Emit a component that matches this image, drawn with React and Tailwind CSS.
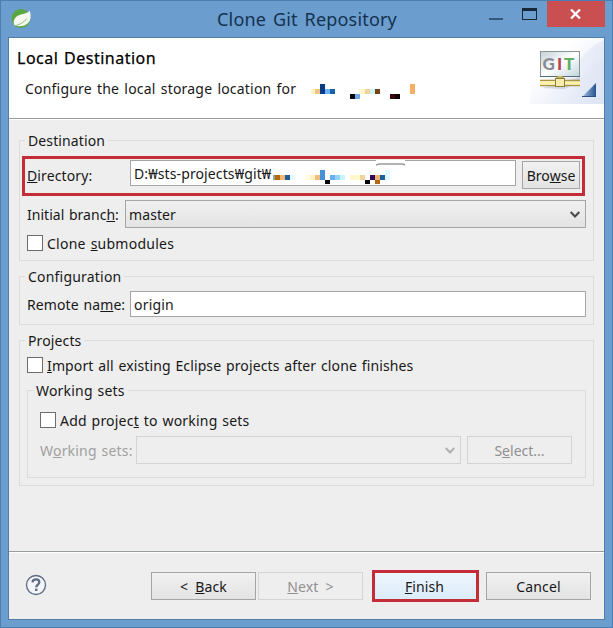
// [x, y, width, height, color]
const headerBlocks = [
  [1, 5, 4, 5, "#fff3c4"],
  [5, 5, 5, 5, "#eec489"],
  [10, 0, 5, 10, "#0a3c86"],
  [15, 5, 5, 5, "#6cb2f4"],
  [20, 5, 5, 5, "#1762a8"],
  [40, 10, 5, 5, "#08080c"],
  [45, 10, 5, 5, "#71a9e8"],
  [49, 5, 6, 5, "#fff6cb"],
  [55, 5, 5, 5, "#f2d39b"],
  [60, 5, 5, 5, "#c8f5ff"],
  [65, 5, 5, 5, "#7c4317"],
  [80, 10, 5, 5, "#38060c"],
  [85, 10, 5, 5, "#100305"],
  [100, 0, 5, 10, "#f4ae66"],
];

const pathBlocks = [
  [0, 5, 3, 5, "#8fa69a"],
  [2, 5, 5, 5, "#b4690f"],
  [7, 5, 5, 5, "#f0b775"],
  [12, 5, 5, 5, "#1c5d9c"],
  [17, 5, 5, 5, "#e6fbff"],
  [32, 5, 5, 5, "#fffbe6"],
  [37, 5, 5, 5, "#fff3c0"],
  [42, 5, 5, 5, "#f2bc7c"],
  [47, 0, 5, 10, "#4590d6"],
  [52, 10, 5, 4, "#050505"],
  [57, 5, 5, 5, "#68aef0"],
  [62, 5, 5, 5, "#92d3fa"],
  [67, 5, 5, 5, "#c8f3ff"],
  [77, 5, 10, 5, "#fff8c8"],
  [87, 5, 5, 5, "#f0d49c"],
  [92, 10, 5, 4, "#050505"],
  [97, 5, 5, 5, "#31085c"],
  [102, 5, 5, 5, "#f0b26e"],
  [102, 10, 5, 4, "#b06b12"],
  [107, 5, 5, 5, "#1c5f9f"],
  [112, 0, 5, 10, "#e0faff"],
];

function Blocks({ items, className }) {
  return (
    <svg className={`shrink-0 ${className}`} width="118" height="15" shapeRendering="crispEdges">
      {items.map(([x, y, w, h, fill], i) => (
        <rect key={i} x={x} y={y} width={w} height={h} fill={fill} />
      ))}
    </svg>
  );
}

function SpringLogo() {
  return (
    <svg width="22" height="22" viewBox="0 0 22 22">
      <circle cx="10" cy="10.500" r="9.500" fill="#58a741" />
      <path
        d="M18.500 2.500C17 5.500 12.500 5.500 8.500 7C3.500 9 1.500 13 3.500 17.500C9 19 15 18 18 14C20.300 11 20 6 18.500 2.500Z"
        fill="#f5f9ef"
      />
      <path d="M2.500 18C8.500 17 13 14.500 15.800 10.500" fill="none" stroke="#8dbf7b" strokeWidth="1" />
    </svg>
  );
}

function GitBanner() {
  return (
    <svg className="shrink-0" width="74" height="66" viewBox="0 0 74 66">
      <defs>
        <linearGradient id="sky" x1="0" y1="0" x2="1" y2="1">
          <stop offset="0.300" stopColor="#fff" />
          <stop offset="1" stopColor="#e0e6f5" />
        </linearGradient>
        <linearGradient id="board" x1="0" y1="0" x2="1" y2="1">
          <stop offset="0" stopColor="#c3d0da" />
          <stop offset="0.500" stopColor="#fff" />
          <stop offset="1" stopColor="#c0d4de" />
        </linearGradient>
        <linearGradient id="corner" x1="0" y1="0" x2="1" y2="0">
          <stop offset="0" stopColor="#a9c3e6" />
          <stop offset="1" stopColor="#25528f" />
        </linearGradient>
        <linearGradient id="haze" x1="0" y1="0" x2="1" y2="0">
          <stop offset="0" stopColor="#e4eaf7" stopOpacity="0" />
          <stop offset="1" stopColor="#dde4f4" />
        </linearGradient>
      </defs>
      <rect width="74" height="66" fill="url(#sky)" />
      <path d="M74 2Q58 9 49 23T10 66H74Z" fill="url(#haze)" opacity="0.700" />
      <path d="M74 22Q52 30 35 66H74Z" fill="url(#haze)" opacity="0.700" />
      <path d="M12 50L50 39L50 44L34 51Z" fill="#8e9db8" opacity="0.350" />
      <rect x="10.500" y="13.500" width="39" height="25" fill="url(#board)" stroke="#8d958f" />
      <path d="M10 38.500H50" stroke="#5a6e72" />
      <g fontFamily="Lato, sans-serif" fontSize="17" fontWeight="900" letterSpacing="0">
        <text x="12.500" y="32" fill="#8a8c93">G</text>
        <text x="27" y="32" fill="#b5484e">I</text>
        <text x="34" y="32" fill="#62ae66">T</text>
      </g>
      <path d="M10 42.500H50M10 47.500H50" stroke="#ab963f" strokeWidth="1.500" />
      <path d="M10 45H50" stroke="#fff3a5" strokeWidth="3" />
      <path d="M27 38V41H33V38" fill="#c7b65d" stroke="#92813a" />
      <rect x="25.500" y="40.500" width="9" height="8" fill="#f5edb0" stroke="#8f7e33" />
      <path d="M52 59L66 45V59Z" fill="url(#corner)" />
      <path d="M52 58.500H66" stroke="#2d4d83" />
    </svg>
  );
}

function HelpIcon() {
  return (
    <svg className="mt-[2px] mr-[104px] shrink-0" width="22" height="22" viewBox="0 0 22 22" fill="none" stroke="#5d6b85">
      <circle cx="11" cy="11" r="9.500" strokeWidth="1.300" fill="#f3f5f8" />
      <path d="M7.500 8.300C7.800 4.300 14.300 4.400 14.300 8.200C14.300 10.500 11.200 10.600 11.200 13.300" strokeWidth="2.300" />
      <path d="M11.200 14.600V17" strokeWidth="2.400" />
    </svg>
  );
}

function Group({ title, className, children }) {
  return (
    <section className={`border border-[#dcdcdc] ${className}`}>
      <h2 className="-mt-[11px] ml-[5px] h-[21px] w-fit bg-[#eee] px-[3px] leading-[21px]">{title}</h2>
      {children}
    </section>
  );
}

function Button({ className = "", disabled, children }) {
  return (
    <button
      className={`flex h-[28px] shrink-0 items-center justify-center border pt-[2px] ${
        disabled ? "border-[#d4d4d4] bg-[#eee] text-[#909090]" : "border-[#a5a5a5] bg-linear-to-b from-[#f1f1f1] to-[#e3e3e3]"
      } ${className}`}
    >
      {children}
    </button>
  );
}

function Combo({ value, disabled, className }) {
  return (
    <div
      className={`flex h-[28px] items-center justify-between border pr-[5px] pl-[3px] ${
        disabled ? "border-[#d4d4d4] text-[#b0b0b0]" : "border-[#a5a5a5] bg-linear-to-b from-[#f0f0f0] to-[#e3e3e3] text-[#484848]"
      } ${className}`}
    >
      <span className="pt-px tracking-[0.1px] text-[#181818]">{value}</span>
      <svg className="mt-[2px]" width="10" height="8" viewBox="0 0 10 8">
        <path d="M0.700 1L5 5.500L9.300 1" fill="none" stroke="currentColor" strokeWidth="2" />
      </svg>
    </div>
  );
}

function Check({ className = "", children }) {
  return (
    <label className={`flex h-[16px] items-center gap-[4px] ${className}`}>
      <span className="size-[16px] shrink-0 border border-[#6c6c6c] bg-white" />
      <span className="pt-px whitespace-pre">{children}</span>
    </label>
  );
}

export default function App() {
  return (
    <div className="flex h-[628px] w-[613px] flex-col border border-[#4b7eb2] bg-[#6b9dce] px-[7px] pb-[7px] font-['Noto_Sans','Noto_Sans_CJK_KR',sans-serif] text-[14px] leading-[20px] tracking-[0.12px] text-[#181818] [word-spacing:1px] select-none">
      <header className="flex h-[36px] shrink-0 items-start">
        <div className="mt-[7px] ml-[3px] w-[206px] shrink-0">
          <SpringLogo />
        </div>
        <h1 className="mt-[6px] w-[258px] shrink-0 text-[18px] leading-[24px] tracking-[0.18px] whitespace-nowrap text-[#14324f] [word-spacing:2px]">Clone Git Repository</h1>
        <svg className="mt-[7px] shrink-0" width="64" height="14" viewBox="0 0 64 14">
          <path d="M14 11H28" stroke="#345878" strokeWidth="2" />
          <rect x="47.500" y="0.500" width="14" height="11" fill="none" stroke="#172938" />
          <path d="M47 1.500H62" stroke="#172938" strokeWidth="3" />
        </svg>
        <div className="ml-[8px] flex h-[26px] w-[58px] shrink-0 items-center justify-center bg-[#c94f50]">
          <svg className="-ml-px" width="11" height="10" viewBox="0 0 11 10">
            <path d="M1 0.500L10 9.500M10 0.500L1 9.500" stroke="#fff" strokeWidth="2.200" />
          </svg>
        </div>
      </header>

      <main className="flex min-h-0 w-[597px] flex-1 flex-col border border-[#527da8] bg-[#eee]">
        <div className="flex h-[81px] shrink-0 justify-between border-b border-[#969c9b] bg-white">
          <div className="pt-[9px] pl-[8px]">
            <h2 className="text-[16px] leading-[22px] tracking-[0.5px] text-black [-webkit-text-stroke:0.25px_black]">Local Destination</h2>
            <div className="mt-[10px] ml-[8px] flex">
              <p className="w-[272px] tracking-[0.2px] whitespace-nowrap [word-spacing:1.300px]">Configure the local storage location for</p>
              <Blocks items={headerBlocks} className="mt-[5px] ml-[13px]" />
            </div>
          </div>
          <GitBanner />
        </div>

        <div className="flex h-[433px] shrink-0 flex-col border-t border-b border-t-white border-b-[#969c9b] pt-[20px] pl-[10px]">
          <Group title="Destination" className="h-[121px] w-[575px]">
            <div className="mt-[5px] ml-[2px] flex h-[40px] w-[563px] border-[3px] border-[#c32d38] pl-[2px]">
              <span className="mt-[7px] w-[103px]"><u>D</u>irectory:</span>
              <div className="mt-px flex h-[26px] w-[386px] border border-[#a5a5a5] bg-white pl-[3px] leading-[25px] whitespace-nowrap">
                <span className="w-[139px]">D:₩sts-projects₩git₩</span>
                <Blocks items={pathBlocks} className="mt-[9px]" />
                <svg className="-mt-px -ml-[15px]" width="30" height="6">
                  <path d="M0 0H29V3H0Z" fill="#fff" />
                  <path d="M0 5L3 4H27L29 5" fill="none" stroke="#9b9b9b" strokeWidth="1.500" />
                </svg>
              </div>
              <Button className="mt-[2px] ml-[6px] w-[58px] tracking-normal">Bro<u>w</u>se</Button>
            </div>
            <div className="mt-[4px] ml-[7px] flex items-center">
              <span className="w-[98px] pt-px tracking-[0.02px] whitespace-nowrap">Initial branc<u>h</u>:</span>
              <Combo value="master" className="w-[461px]" />
            </div>
            <Check className="mt-[7px] ml-[7px] tracking-[0.25px]">Clone <u>s</u>ubmodules</Check>
          </Group>

          <Group title="Configuration" className="mt-[15px] h-[49px] w-[575px] tracking-[0.2px]">
            <div className="mt-[4px] ml-[7px] flex items-center">
              <span className="w-[103px] pt-px tracking-[0.1px] whitespace-nowrap">Remote na<u>m</u>e:</span>
              <div className="h-[26px] w-[456px] border border-[#a5a5a5] bg-white pl-[3px] leading-[26px]">origin</div>
            </div>
          </Group>

          <Group title="Projects" className="mt-[15px] h-[146px] w-[575px]">
            <Check className="mt-[6px] ml-[7px]"><u>I</u>mport all existing Eclipse projects after clone finishes</Check>
            <Group title="Working sets" className="mt-[17px] ml-[7px] h-[88px] w-[559px] tracking-[0.2px]">
              <Check className="mt-[11px] ml-[12px]">Add projec<u>t</u> to working sets</Check>
              <div className="mt-[8px] ml-[12px] flex items-center">
                <span className="w-[96px] pt-px whitespace-nowrap text-[#a0a0a0]">W<u>o</u>rking sets:</span>
                <Combo disabled className="w-[325px]" />
                <Button disabled className="ml-[6px] w-[105px] tracking-normal">S<u>e</u>lect...</Button>
              </div>
            </Group>
          </Group>
        </div>

        <footer className="flex flex-1 items-start border-t border-white pt-[19px] pl-[16px]">
          <HelpIcon />
          <Button className="w-[105px] gap-[7px]">&lt;<span><u>B</u>ack</span></Button>
          <Button disabled className="ml-[2px] w-[105px] gap-[7px]"><span><u>N</u>ext</span>&gt;</Button>
          <button className="-mt-[2px] ml-[9px] flex h-[32px] w-[107px] shrink-0 items-center justify-center border-[3px] border-[#c32d38] bg-linear-to-b from-[#ecf5fd] to-[#dcecfb] pt-[2px]">
            <span className="-ml-[2px]"><u>F</u>inish</span>
          </button>
          <Button className="ml-[7px] w-[105px]">Cancel</Button>
        </footer>
      </main>
    </div>
  );
}
